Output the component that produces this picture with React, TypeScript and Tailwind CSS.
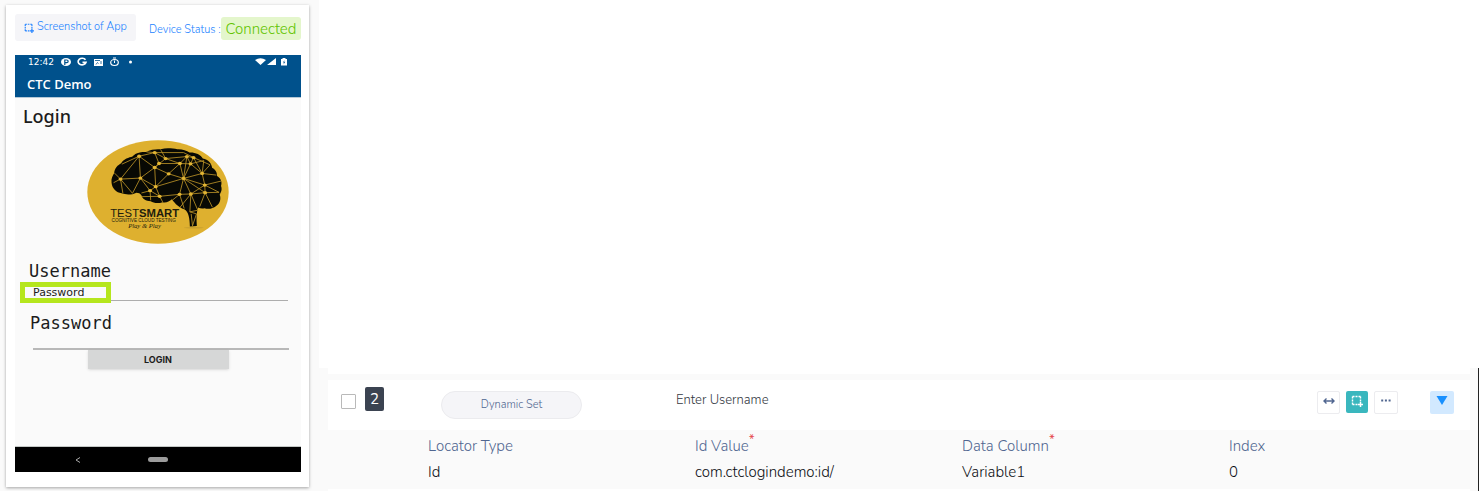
const fields = [
  { label: "Locator Type", value: "Id", required: false },
  { label: "Id Value", value: "com.ctclogindemo:id/", required: true },
  { label: "Data Column", value: "Variable1", required: true },
  { label: "Index", value: "0", required: false },
];

function CaptureIcon({ className }: { className: string }) {
  return (
    <svg viewBox="0 0 12 12" className={className} fill="none" stroke="currentColor" aria-hidden="true">
      <path d="M1.5 1.5h8M1.5 9.5h6M1.5 1.5v8M9.5 1.5v6" strokeWidth="1.4" strokeDasharray="2 1" />
      <path d="M7 9.5h5M9.5 7v5" strokeWidth="1.5" />
    </svg>
  );
}

const nodes = [
  [151, 147], [211, 144], [207, 78], [254, 67], [267, 100], [287, 85], [254, 112], [296, 131],
  [257, 170], [240, 182], [269, 199], [330, 100], [362, 101], [351, 79], [371, 82], [341, 145],
  [397, 130], [405, 165], [406, 188], [363, 192], [329, 193],
];

function BrainLogo() {
  return (
    <svg viewBox="50 29 428 314" className="h-[104px] w-[142px]" preserveAspectRatio="none" role="img" aria-label="TestSmart">
      <ellipse cx="264" cy="186" rx="213" ry="156" fill="#deb02f" />
      <path
        d="M124 158C122 146 128 137 132 129C133 113 143 105 153 99C160 86 177 82 187 79C197 66 216 65 228 65C242 57 260 56 272 57C290 52 309 55 322 57C336 56 350 61 359 67C375 66 393 73 399 85C416 88 426 101 427 113C439 119 442 129 442 138C454 145 458 157 454 168C459 181 452 189 450 194C455 207 450 220 442 226C429 237 416 239 404 235C398 237 391 236 385 233C379 249 380 268 381 289L360 290C360 266 356 245 343 238C330 235 315 222 306 208C298 215 289 219 278 217C263 222 250 219 242 214C227 213 217 207 214 196C211 190 205 188 199 188C185 195 168 195 154 190C139 187 126 177 124 158Z"
        fill="#080904"
      />
      <g fill="none" stroke="#bd9427" strokeWidth="2.500">
        <path d="M151 147L207 78L211 144ZM151 147L130 158M151 147L158 189M151 147L187 190L211 144L254 112L207 78L254 67L287 85L254 112L267 100L254 67M151 147L133 129M207 78L155 102M211 144L257 170L254 112L296 131L341 145L257 170L240 182L211 144M214 189L240 182L269 199L257 170M240 182L242 211M269 199L216 200M269 199L278 216M269 199L329 193L341 145L363 192L329 193M257 170L296 131L330 100L287 85L351 79L330 100L341 145L362 101L330 100M267 100L330 100M254 67L341 67L371 82L351 79L362 101L371 82L397 130L341 145L351 79M287 85L272 58M254 67L229 65M397 130L362 101L402 91L397 130L440 135M397 130L405 165L341 145L406 188L363 192L405 165L406 188L448 187L405 165L454 153M406 188L390 230M406 188L428 232M363 192L329 234M363 192L384 241L360 246L363 192M329 193L307 211M360 246L380 252L368 288L364 252M329 193L343 236M371 82L421 104L397 130" />
      </g>
      <g fill="#e2b534">
        {nodes.map(([x, y]) => (
          <ellipse key={`${x}-${y}`} cx={x} cy={y} rx="6" ry="5" />
        ))}
      </g>
      <ellipse cx="372" cy="294" rx="30" ry="2" fill="#b99531" opacity=".6" />
      <g fill="#211d0d" fontFamily="Liberation Sans, Arial, sans-serif">
        <text x="120" y="263" fontSize="34">
          TEST<tspan fontWeight="700">SMART</tspan>
        </text>
        <text x="124" y="277" fontSize="14">COGNITIVE CLOUD TESTING</text>
        <text x="174" y="296" fontSize="20" fontFamily="Liberation Serif, serif" fontStyle="italic">
          Play &amp; Play
        </text>
      </g>
    </svg>
  );
}

function StatusIcons() {
  return (
    <svg viewBox="0 0 74 10" className="ml-[7px] h-[10px] w-[74px]" aria-hidden="true">
      <ellipse cx="5" cy="5" rx="5" ry="4" fill="#fff" />
      <path d="M3.8 8V3h2a1.3 1.3 0 0 1 0 2.700H4" fill="none" stroke="#00518c" strokeWidth="1.2" />
      <path d="M24.500 2.800A4 3.300 0 1 0 25 5.300H21.500" fill="none" stroke="#fff" strokeWidth="1.700" />
      <path d="M33 2h9v7h-9z" fill="#fff" />
      <path d="M34 3.500h5M35 7.500l1.500-2 1 1M40 4v3" fill="none" stroke="#00518c" strokeWidth=".8" />
      <ellipse cx="53.500" cy="5.500" rx="3.800" ry="3" fill="none" stroke="#fff" strokeWidth="1.200" />
      <path d="M52 1h3M53.500 3.500v2.500" stroke="#fff" />
      <circle cx="69.500" cy="5" r="1.500" fill="#fff" />
    </svg>
  );
}

function PhoneScreen() {
  return (
    <section aria-label="Device screen" className="mt-[14px] bg-[#fafafa] font-normal text-[#1c1c1c]">
      <header className="h-[42px] bg-[#00518c] pt-[1px] text-white">
        <div className="flex h-3 items-center pr-3 pl-[13px] font-['DejaVu_Sans'] text-[9px]">
          <span className="leading-3">12:42</span>
          <StatusIcons />
          <svg viewBox="0 0 34 10" className="ml-auto h-[10px] w-[34px]" fill="#fff" aria-hidden="true">
            <path d="M0 3Q5.500-.5 11 3L5.500 8ZM12 8L21 1V8ZM26 2h1.500V1h3v1H32v6.500h-6z" />
            <path d="M29.500 3l-1.500 2.500h1L28.500 7.500L30.300 4.800H29Z" fill="#00518c" />
          </svg>
        </div>
        <h1 className="mt-2 pl-3 font-['Open_Sans'] text-[13px] leading-4 font-semibold">CTC Demo</h1>
      </header>
      <div className="flex h-[350px] flex-col border-t border-b border-t-[#b5c9d8] border-b-[#c4c8c6]">
        <h2 className="mt-[6px] pl-2 font-['Noto_Sans'] text-[18px] leading-6 font-medium">Login</h2>
        <div className="mt-3 flex justify-center">
          <BrainLogo />
        </div>
        <label htmlFor="device-user" className="mt-[17px] pl-[14px] font-['DejaVu_Sans_Mono'] text-[17px] leading-5">
          Username
        </label>
        <div className="mt-[2px] mr-[13px] ml-[5px] flex h-[20px] items-end">
          <input
            id="device-user"
            defaultValue="Password"
            className="h-[21px] w-[91px] border-[5px] border-[#b5e61d] bg-[#fafafa] pl-2 font-['DejaVu_Sans'] text-[11px] leading-3 outline-none"
          />
          <span className="mb-[2px] h-px flex-1 bg-[#adadad]" />
        </div>
        <label htmlFor="device-pass" className="mt-[10px] pl-[15px] font-['DejaVu_Sans_Mono'] text-[17px] leading-5">
          Password
        </label>
        <input
          id="device-pass"
          type="password"
          className="mr-3 ml-[18px] h-[17px] border-b-2 border-[#b8b8b8] bg-transparent outline-none"
        />
        <button className="mx-auto h-[19px] w-[141px] bg-[#d6d7d7] font-['Inter'] text-[9px] font-bold shadow-sm">
          LOGIN
        </button>
      </div>
      <nav aria-label="Device navigation" className="flex h-[25px] items-center bg-black">
        <button aria-label="Back" className="ml-[60px]">
          <svg viewBox="0 0 6 6" className="h-[6px] w-[6px]" fill="none" stroke="#aaa">
            <path d="M5 .5L1 3L5 5.500" />
          </svg>
        </button>
        <button aria-label="Home" className="ml-[67px] h-[5px] w-5 rounded-full bg-[#9c9c9c]" />
      </nav>
    </section>
  );
}

export default function App() {
  return (
    <div className="flex min-h-screen bg-white font-['Nunito','Lato','Noto_Sans',sans-serif] font-light">
      <aside className="w-[319px] shrink-0 bg-[#fafafa] pt-[5px] pr-[10px] pb-1 pl-[6px]">
        <div className="bg-white pt-[9px] pr-2 pb-[15px] pl-[9px] shadow-[0_1px_3px_rgba(0,0,0,0.35)]">
          <div className="flex h-[27px] items-center whitespace-nowrap text-[#2383ff]">
            <button className="flex h-[27px] w-[121px] shrink-0 items-center gap-[3px] rounded-[3px] bg-[#f5f5f8] pl-[9px] text-[11px]">
              <CaptureIcon className="h-[10px] w-[10px]" />
              Screenshot of App
            </button>
            <span className="ml-[13px] pt-[6px] text-[11px]">Device Status :</span>
            <span className="mt-[2px] ml-auto flex h-[23px] w-20 shrink-0 items-center justify-center rounded-[3px] bg-[#e4f6cc] pt-[1px] text-[15px] text-[#62c400]">
              Connected
            </span>
          </div>
          <PhoneScreen />
        </div>
      </aside>

      <main className="flex min-w-0 flex-1 flex-col pt-[368px] pr-1">
        <section className="flex-1 border-r border-[#222] bg-[#fafafa] pr-2 pl-[9px]">
          <div className="h-[6px] bg-white" />
          <div className="mt-[6px] flex h-[50px] items-center bg-white pr-4 pl-[13px]">
            <input
              type="checkbox"
              aria-label="Select step 2"
              className="mt-[-8px] h-[15px] w-[15px] appearance-none rounded-[1px] border border-[#b9b9b9] bg-white checked:bg-[#3b90ff]"
            />
            <span className="mt-[-12px] ml-[9px] flex h-6 w-[19px] items-center justify-center rounded-[2px] bg-[#3b4351] pt-[1px] text-[15px] font-normal text-white">
              2
            </span>
            <button className="ml-[57px] h-7 w-[141px] rounded-full border border-[#ebebee] bg-[#f5f5f8] text-[11px] text-[#506690]">
              Dynamic Set
            </button>
            <p className="mt-[-8px] ml-[94px] text-[13px] text-[#33383f]">Enter Username</p>
            <div className="mt-[-6px] ml-auto flex items-center gap-[6px] text-[#506690]">
              <button aria-label="Resize" className="flex h-[23px] w-[23px] justify-center rounded-[2px] border border-[#ececef] bg-white pt-1">
                <svg viewBox="0 0 12 10" className="h-[10px] w-3" fill="none" stroke="currentColor" strokeWidth="1.400">
                  <path d="M1.500 5h9M3.500 2.500L1 5l2.500 2.500M8.500 2.500L11 5L8.500 7.500" />
                </svg>
              </button>
              <button aria-label="Capture" className="flex h-[22px] w-[22px] justify-center rounded-[2px] bg-[#3ab7be] pt-1 text-white">
                <CaptureIcon className="h-3 w-3" />
              </button>
              <button aria-label="More" className="flex h-[23px] w-6 justify-center rounded-[2px] border border-[#ececef] bg-white pt-1">
                <svg viewBox="0 0 10 10" className="h-[10px] w-[10px]" fill="currentColor">
                  <path d="M.2 3.500h2v2h-2zM3.900 3.500h2v2h-2zM7.600 3.500h2v2h-2z" />
                </svg>
              </button>
              <button aria-label="Collapse" className="ml-[26px] flex h-[23px] w-6 justify-center rounded-[2px] bg-[#d2e9ff] pt-[5px]">
                <svg viewBox="0 0 12 9" className="h-[9px] w-3" fill="#1890ff">
                  <path d="M.5 0h11L6 9Z" />
                </svg>
              </button>
            </div>
          </div>
          <div className="border-b-2 border-white pt-[3px] pb-1 pl-[100px]">
            <table className="w-full table-fixed text-left text-[15px]">
              <thead>
                <tr className="h-[26px] text-[#506690]">
                  {fields.map((f) => (
                    <th key={f.label} scope="col" className="p-0 font-light last:w-[241px]">
                      {f.label}
                      {f.required && <sup className="text-[13px] leading-none font-normal text-[#e5484d]">*</sup>}
                    </th>
                  ))}
                </tr>
              </thead>
              <tbody>
                <tr className="h-[26px] text-[#0c0f14]">
                  {fields.map((f) => (
                    <td key={f.label} className="p-0">
                      {f.value}
                    </td>
                  ))}
                </tr>
              </tbody>
            </table>
          </div>
        </section>
      </main>
    </div>
  );
}
